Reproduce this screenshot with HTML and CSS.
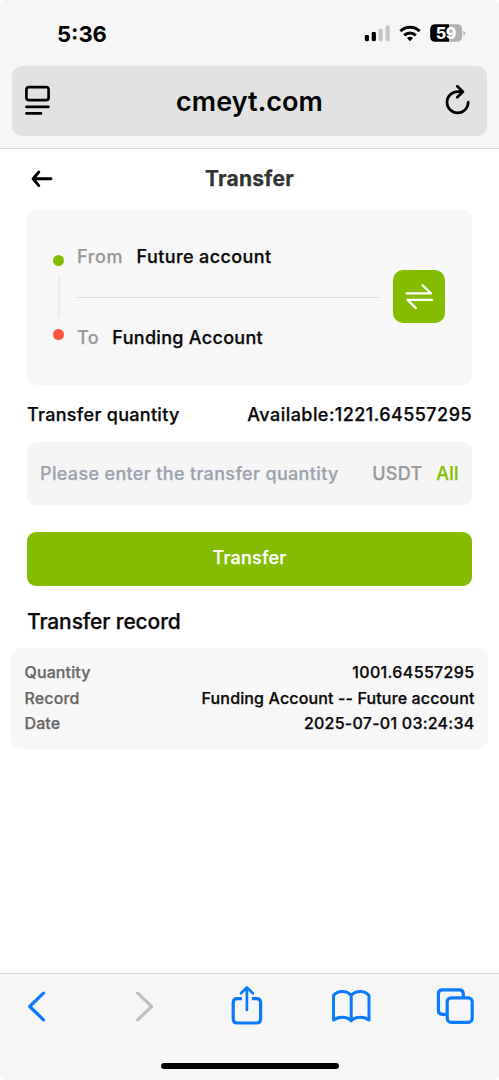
FILE: index.html
```
<!DOCTYPE html>
<html lang="en">
<head>
<meta charset="utf-8">
<title>Transfer</title>
<link rel="stylesheet" href="styles.css">
</head>
<body>
<div class="phone">
  <header class="browser-head">
    <div class="status">
      <span class="clock">5:36</span>
      <svg class="status-icons" width="104" height="24" viewBox="364 22 104 24">
        <rect x="364.8" y="35" width="4.2" height="6.2" rx="1.4"/>
        <rect x="371.7" y="32" width="4.2" height="9.2" rx="1.4"/>
        <g fill="#c6c6c6"><rect x="378.6" y="28.8" width="4.2" height="12.4" rx="1.4"/><rect x="385.5" y="25.4" width="4.2" height="15.8" rx="1.4"/></g>
        <g fill="none" stroke="#000" stroke-width="3"><path d="M400.4 31.2a13.8 13.8 0 0 1 19.2 0"/><path d="M404.2 35.3a8.4 8.4 0 0 1 11.6 0"/></g>
        <path d="M406.9 38.1a4.7 4.7 0 0 1 6.2 0L410 41.2z"/>
        <path d="M435.500 24.200H449V41.800H435.500Q430.200 41.800 430.200 36.500V29.500Q430.200 24.200 435.500 24.200Z"/>
        <path fill="#b1b1b1" d="M449 24.200H456.800Q462.100 24.200 462.100 29.500V36.500Q462.100 41.800 456.800 41.800H449Z"/>
        <path fill="#b1b1b1" d="M463.400 30.700q1.800.8 1.800 2.500t-1.800 2.500z"/>
        <text class="battery-level" x="445.900" y="38.900" text-anchor="middle">59</text>
      </svg>
    </div>
    <div class="address">
      <svg width="28" height="32" viewBox="23 85.200 28 32" fill="none" stroke="#000" stroke-width="2.700" stroke-linecap="round"><rect x="26.400" y="87.400" width="22.200" height="13" rx="2.600"/><path d="M26.500 107.100H48.400M26.500 113.600H41"/></svg>
      <span class="domain">cmeyt.com</span>
      <svg width="28" height="32" viewBox="444 85 28 32" fill="none" stroke="#000" stroke-width="2.700" stroke-linecap="round" stroke-linejoin="round"><path d="M468.200 102.200A10.600 10.600 0 1 1 457.600 91.600H462.400M457.300 86.300L462.900 91.700L457.300 97.300"/></svg>
    </div>
  </header>

  <main>
    <div class="title-row">
      <svg width="24" height="20" viewBox="30 169 24 20" fill="none" stroke="#000" stroke-width="2.900" stroke-linecap="round" stroke-linejoin="round"><path d="M51 178.800H33.300M38.800 172L33.100 178.800L38.800 185.600"/></svg>
      <h1>Transfer</h1>
    </div>

    <section class="accounts">
      <div class="route"><i class="dot from"></i><i class="link"></i><i class="dot to"></i></div>
      <div class="lines">
        <div class="account"><span class="muted from-label">From</span><span class="from-name">Future account</span></div>
        <div class="rule"></div>
        <div class="account"><span class="muted to-label">To</span><span class="to-name">Funding Account</span></div>
      </div>
      <button class="swap" aria-label="Swap accounts"><svg width="30" height="28" viewBox="404 283 30 28" fill="none" stroke="#fff" stroke-width="2.200" stroke-linecap="round" stroke-linejoin="round"><path d="M406.500 293.400H431L422.600 285.200M432 299.900H407.500L415.900 308.100"/></svg></button>
    </section>

    <div class="quantity-head"><span class="quantity-title">Transfer quantity</span><span class="available">Available:1221.64557295</span></div>
    <div class="field"><span class="placeholder">Please enter the transfer quantity</span><span class="unit">USDT</span><span class="all">All</span></div>
    <button class="submit"><span>Transfer</span></button>

    <h2><span>Transfer record</span></h2>
    <section class="record">
      <div><span class="k-quantity">Quantity</span><b class="v-quantity">1001.64557295</b></div>
      <div><span class="k-record">Record</span><b class="v-record">Funding Account -- Future account</b></div>
      <div><span class="k-date">Date</span><b class="v-date">2025-07-01 03:24:34</b></div>
    </section>
  </main>

  <footer>
    <svg class="tools" width="499" height="60" viewBox="0 974 499 60" fill="none" stroke="#0a7aff" stroke-width="3.200" stroke-linecap="round" stroke-linejoin="round">
      <path d="M43.500 993.200L29.700 1006.500L43.500 1019.800"/>
      <path stroke="#bfbfbf" d="M137.700 993.200L151.700 1006.500L137.700 1019.800"/>
      <path stroke-linecap="butt" d="M242 998.700H237.200Q233.200 998.700 233.200 1002.700V1019Q233.200 1023 237.200 1023H256.600Q260.600 1023 260.600 1019V1002.700Q260.600 998.700 256.600 998.700H251.800"/>
      <path stroke-width="2.700" d="M246.900 1010V987.700M241 993.200L246.900 987.400L252.800 993.200"/>
      <path stroke-width="3" d="M351.200 995.500C346.500 990.200 338 990.300 333.500 995.400V1020C338 1016.300 346.500 1015.800 351.200 1020.800C356 1015.800 364.500 1016.300 369 1020V995.400C364.500 990.300 356 990.200 351.200 995.500V1020"/>
      <path d="M446.500 1014.300H442.400Q438.400 1014.300 438.400 1010.300V993.900Q438.400 989.900 442.400 989.900H459.300Q463.300 989.900 463.300 993.900V997"/>
      <rect x="447.200" y="997.800" width="25" height="24.600" rx="4"/>
    </svg>
    <div class="home"></div>
  </footer>
</div>
</body>
</html>
```
FILE: styles.css
```
* { box-sizing: border-box; }
body { margin: 0; background: #fff; font-family: Inter, "Liberation Sans", sans-serif; font-weight: 500; color: #080808; }
h1, h2 { margin: 0; }
button { border: 0; padding: 0; font: inherit; }
svg { display: block; flex: none; }
span, b { white-space: nowrap; }
.phone { width: 499px; height: 1080px; display: flex; flex-direction: column; overflow: hidden; border-radius: 5px; }

.browser-head { height: 149px; background: #f6f6f6; border-bottom: 1px solid #d4d4d4; padding: 0 12px; }
.status { height: 66px; display: flex; justify-content: space-between; padding: 22px 19px 0 45px; }
.clock { font-size: 22px; line-height: 24px; font-weight: 700; color: #000; }
.battery-level { font-size: 16px; font-weight: 800; fill: #fff; letter-spacing: -.3px; }
.address { height: 70px; border-radius: 10px; background: #e2e2e2; display: flex; align-items: center; justify-content: space-between; padding: 0 15px 0 11px; color: #000; }
.domain { font-size: 27px; font-weight: 600; letter-spacing: .05px; padding-left: 4px; }

main { flex: 1; display: flex; flex-direction: column; padding: 0 27px; -webkit-text-stroke-width: .25px; }
.title-row { height: 61px; display: grid; grid-template-columns: 24px 1fr 24px; align-items: center; padding: 0 3px 2px; }
.title-row h1 { font-size: 21px; line-height: 24px; font-weight: 700; letter-spacing: .25px; color: #333; text-align: center; }
.accounts { height: 175px; border-radius: 9px; background: #f7f7f7; display: flex; padding: 0 27px 1px 26px; align-items: center; }
.route { width: 11px; display: flex; flex-direction: column; align-items: center; }
.dot { width: 11px; height: 11px; border-radius: 50%; }
.dot.from { background: #84bd00; }
.dot.to { background: #ff533d; }
.link { width: 2px; height: 41px; background: #ebebeb; margin: 11px 0; }
.lines { width: 302px; margin: 0 14px 0 13px; }
.account { display: flex; font-size: 18px; line-height: 24px; gap: 13.500px; letter-spacing: .3px; }
.from-label { letter-spacing: .6px; }
.from-name { letter-spacing: .4px; }
.muted { color: #999; }
.rule { height: 1px; background: #dadada; margin: 28px 0; }
.swap { width: 52px; height: 53px; margin-bottom: 1px; border-radius: 10px; background: #84bd00; display: grid; place-items: center; }

.quantity-head { height: 57px; padding-top: 1px; display: flex; justify-content: space-between; align-items: center; font-size: 18px; letter-spacing: .3px; }
.available { letter-spacing: .45px; }
.field { height: 63px; border-radius: 9px; background: #f5f5f5; display: flex; align-items: center; padding: 0 13px; font-size: 18px; letter-spacing: .34px; }
.placeholder { color: #9ca3af; margin-right: auto; }
.unit { color: #999; margin-right: 13.500px; }
.all { color: #84bd00; }
.submit { height: 54px; margin-top: 27px; padding-bottom: 3px; border-radius: 9px; background: #84bd00; color: #fff; font-size: 18px; letter-spacing: .2px; }
h2 { height: 62px; padding-top: 22px; font-size: 21px; line-height: 28px; font-weight: 500; letter-spacing: -.12px; }
.record { height: 101px; margin: 0 -16px; padding: 12px 13.500px; border-radius: 10px; background: #f7f7f7; font-size: 16px; }
.record div { display: flex; justify-content: space-between; line-height: 25.500px; }
.record span { color: #666; letter-spacing: .12px; }
.record b { font-weight: 500; }
.v-quantity { letter-spacing: .35px; }
.v-record { letter-spacing: .14px; }
.v-date { letter-spacing: .25px; }

footer { height: 107px; background: #f6f6f6; border-top: 1px solid #d8d8d8; display: flex; flex-direction: column; align-items: center; }
.home { width: 178px; height: 6px; border-radius: 3px; background: #000; margin-top: 29px; }
```
